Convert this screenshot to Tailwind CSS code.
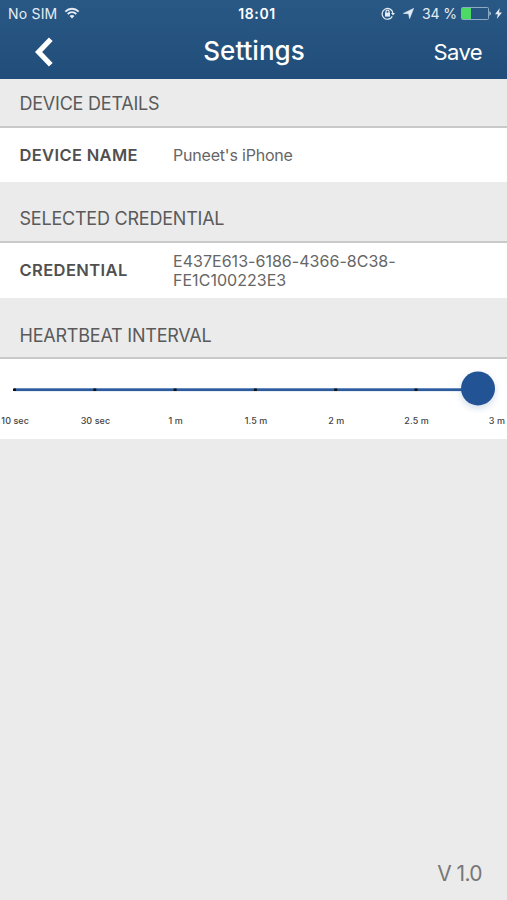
<!DOCTYPE html>
<html lang="en">
<head>
    <meta charset="UTF-8">
    <meta name="viewport" content="width=device-width, initial-scale=1.0">
    <title>Settings</title>
    <script src="https://cdn.jsdelivr.net/npm/@tailwindcss/browser@4"></script>
</head>
<body class="bg-[#ebebeb] text-[#5a5a5a] font-['Inter',sans-serif]">

    <div class="h-[900px] w-[507px] flex flex-col overflow-hidden whitespace-nowrap">

        <header class="h-[79px] shrink-0 bg-linear-to-b from-[#2a5885] to-[#204d79] text-white">
            <!-- status bar -->
            <div class="h-[27px] grid grid-cols-3 items-center pl-2 pr-[5px] text-[14px] text-[#e4edf5]">
                <div class="flex items-center gap-[7px]">
                    <span class="tracking-[0.2px]">No SIM</span>
                    <svg class="w-[16px] h-[12px] -mt-0.5" viewBox="0 0 15 12" fill="none" stroke="currentColor" stroke-width="1.8">
                        <path d="M0.8 4.6C4.6 0.8 10.4 0.8 14.2 4.6"/>
                        <path d="M3.2 7C5.6 4.6 9.4 4.6 11.8 7"/>
                        <path d="M7.5 11.5L5.1 9C6.4 7.7 8.6 7.7 9.9 9Z" fill="currentColor" stroke="none"/>
                    </svg>
                </div>
                <span class="text-center font-semibold text-white tracking-[0.6px] pl-1">18:01</span>
                <div class="flex items-center justify-end">
                    <svg class="w-[14px] h-[13px] mr-[8px]" viewBox="0 0 14 13" fill="none" stroke="currentColor" stroke-width="1.2">
                        <path d="M11.3 9.4A5.4 5.4 0 1 1 11.9 6.2"/>
                        <path d="M10 6h4l-2 2.6z" fill="currentColor" stroke="none"/>
                        <path d="M4 5.6h5v4H4z" fill="currentColor" stroke="none"/>
                        <path d="M5 6V4.6a1.5 1.5 0 0 1 3 0V6"/>
                    </svg>
                    <svg class="w-[11px] h-[11px] mr-[8px]" viewBox="0 0 11 11" fill="currentColor">
                        <path d="M10.6 0.4L6.6 10.6L5.6 5.7L0.4 5.4Z" stroke="currentColor" stroke-width="0.6"/>
                    </svg>
                    <span class="tracking-[-0.1px] mr-[4px]">34 %</span>
                    <svg class="w-[31px] h-[13px] mr-[3px]" viewBox="0 0 31 13">
                        <rect x="0.5" y="0.5" width="27" height="12" rx="1" fill="none" stroke="#8fabc4"/>
                        <rect x="1" y="1" width="9" height="11" fill="#4cd964"/>
                        <path d="M28.5 4q2.6 2.5 0 5z" fill="#c5d5e3"/>
                    </svg>
                    <svg class="w-[7px] h-[11px]" viewBox="0 0 7 11" fill="currentColor">
                        <path d="M4.8 0L0 6.2H2.9L1.8 11L7 4.6H4Z"/>
                    </svg>
                </div>
            </div>
            <!-- nav bar -->
            <div class="h-[46px] grid grid-cols-3 items-center pl-[35px] pr-[25px]">
                <svg class="w-[18px] h-[30px] mt-1" viewBox="0 0 18 30" fill="none" stroke="currentColor" stroke-width="5.2">
                    <path d="M15.8 2.2L3.6 15L15.8 27.8"/>
                </svg>
                <h1 class="justify-self-center text-[26px] font-medium ml-[-9px]">Settings</h1>
                <button class="justify-self-end text-[22px] tracking-[-0.6px] mt-1">Save</button>
            </div>
        </header>

        <h2 class="h-[49px] shrink-0 px-[19.5px] pt-px flex items-center border-b-2 border-[#c9c9c9] text-[18px] tracking-[-0.22px]">DEVICE DETAILS</h2>
        <div class="h-[54px] shrink-0 px-[19.5px] flex items-center bg-white">
            <span class="w-[153.5px] text-[16.5px] font-semibold tracking-[0.35px] text-[#505050]">DEVICE NAME</span>
            <span class="text-[16px] text-[#666] tracking-[-0.2px]">Puneet's iPhone</span>
        </div>

        <h2 class="h-[61px] shrink-0 px-[19.5px] pt-[14px] flex items-center border-b-2 border-[#c9c9c9] text-[18px] tracking-[-0.22px]">SELECTED CREDENTIAL</h2>
        <div class="h-[55px] shrink-0 px-[19.5px] flex items-center bg-white">
            <span class="w-[153.5px] text-[16.5px] font-semibold tracking-[0.4px] text-[#505050]">CREDENTIAL</span>
            <span class="text-[16px] leading-[19px] text-[#666] tracking-[0.03px]">E437E613-6186-4366-8C38-<br>FE1C100223E3</span>
        </div>

        <h2 class="h-[61px] shrink-0 px-[19.5px] pt-[15px] flex items-center border-b-2 border-[#c9c9c9] text-[18px] tracking-[-0.22px]">HEARTBEAT INTERVAL</h2>
        <div class="h-[80px] shrink-0 bg-white">
            <svg class="block w-full h-[54px]" viewBox="0 0 507 54">
                <defs>
                    <filter id="knob" x="-50%" y="-50%" width="200%" height="200%">
                        <feDropShadow dx="0" dy="3" stdDeviation="3" flood-color="#205493" flood-opacity="0.2"/>
                    </filter>
                </defs>
                <rect x="14" y="29.3" width="464" height="2.8" fill="#2c5c9f"/>
                <g fill="#111">
                    <rect x="13" y="29.5" width="3" height="2.5"/>
                    <rect x="93.3" y="29.5" width="3" height="2.5"/>
                    <rect x="173.6" y="29.5" width="3" height="2.5"/>
                    <rect x="253.9" y="29.5" width="3" height="2.5"/>
                    <rect x="334.2" y="29.5" width="3" height="2.5"/>
                    <rect x="414.5" y="29.5" width="3" height="2.5"/>
                </g>
                <circle cx="478" cy="29.4" r="17" fill="#205295" filter="url(#knob)"/>
            </svg>
            <div class="grid grid-cols-7 w-[562px] -ml-[25px] pt-px text-center text-[9px] leading-[13px] tracking-[0.05px] font-medium text-[#444]">
                <span>10 sec</span>
                <span>30 sec</span>
                <span>1 m</span>
                <span>1.5 m</span>
                <span>2 m</span>
                <span>2.5 m</span>
                <span>3 m</span>
            </div>
        </div>

        <footer class="mt-auto h-[53px] pr-[25px] text-right text-[21px] leading-[53px] text-[#777] tracking-[-0.6px]">V 1.0</footer>
    </div>

</body>
</html>
